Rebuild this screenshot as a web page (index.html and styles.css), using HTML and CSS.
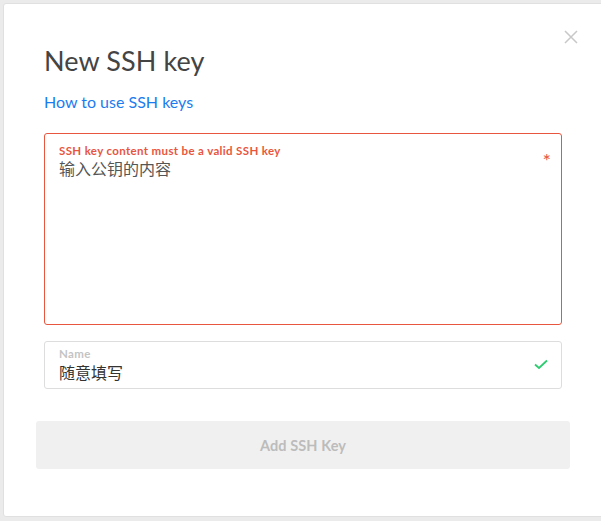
FILE: index.html
```html
<!DOCTYPE html>
<html>
<head>
<meta charset="utf-8">
<link rel="stylesheet" href="styles.css">
</head>
<body>
<div class="modal">
  <button class="close" aria-label="Close">
    <svg width="14" height="14" viewBox="0 0 14 14"><path d="M1 1L13 13M13 1L1 13" stroke="#c8c8c8" stroke-width="1.5" fill="none"/></svg>
  </button>
  <div class="content">
    <h1 class="title">New SSH key</h1>
    <a class="link" href="#">How to use SSH keys</a>
    <div class="field field-error">
      <div class="label label-error">SSH key content must be a valid SSH key</div>
      <div class="value placeholder">输入公钥的内容</div>
      <span class="required">*</span>
    </div>
    <div class="field field-name">
      <div class="label">Name</div>
      <div class="value">随意填写</div>
      <svg class="check" width="14" height="11" viewBox="0 0 14 11"><path d="M1 5.5L5 9L13 1.5" stroke="#2ecc71" stroke-width="1.8" fill="none"/></svg>
    </div>
  </div>
  <div class="actions">
    <button class="submit">Add SSH Key</button>
  </div>
</div>
</body>
</html>
```

FILE: styles.css
```css
html, body {
  margin: 0;
  padding: 0;
  background: #ebebeb;
  font-family: "Lato", "Noto Sans CJK SC", sans-serif;
}
.modal {
  position: relative;
  margin: 3px 0 0 3px;
  width: 620px;
  height: 514px;
  background: #fff;
  border: 1px solid #e0e0e0;
  box-sizing: border-box;
  border-radius: 3px;
}
.close {
  position: absolute;
  top: 26px;
  left: 560px;
  background: none;
  border: 0;
  padding: 0;
  width: 14px;
  height: 14px;
  cursor: pointer;
}
.close svg { display: block; }
.content {
  padding: 41px 0 0 40px;
  width: 518px;
}
.title {
  margin: 0;
  font-size: 27px;
  line-height: 32px;
  font-weight: 400;
  color: #444;
  letter-spacing: 0.1px;
}
.link {
  display: block;
  margin-top: 15px;
  font-size: 16px;
  line-height: 20px;
  color: #1b7cf0;
  text-decoration: none;
}
.field {
  position: relative;
  border: 1px solid #ddd;
  border-radius: 3px;
  padding: 10px 14px 0 14px;
  box-sizing: border-box;
}
.field-error {
  margin-top: 21px;
  height: 192px;
  border-color: #e8563f;
}
.field-name {
  margin-top: 16px;
  height: 48px;
  padding-top: 5px;
}
.field-name .value {
  line-height: 23px;
}
.label {
  font-size: 11.5px;
  font-weight: 700;
  line-height: 14px;
  color: #c4c4c4;
  letter-spacing: 0.35px;
}
.label-error {
  color: #e8563f;
}
.value {
  font-size: 16px;
  line-height: 20px;
  color: #333;
  font-family: "Noto Sans CJK SC", sans-serif;
}
.placeholder {
  color: #555;
}
.required {
  position: absolute;
  right: 10px;
  top: 18px;
  color: #e8563f;
  font-size: 20px;
  font-weight: 400;
  line-height: 16px;
}
.check {
  position: absolute;
  right: 13px;
  top: 17px;
}
.actions {
  padding: 32px 0 0 32px;
  width: 534px;
}
.submit {
  display: block;
  width: 100%;
  height: 48px;
  border: 0;
  border-radius: 3px;
  background: #f0f0f0;
  color: #bcbcbc;
  font-family: "Lato", sans-serif;
  font-size: 14.5px;
  font-weight: 700;
  letter-spacing: 0.1px;
}
```
